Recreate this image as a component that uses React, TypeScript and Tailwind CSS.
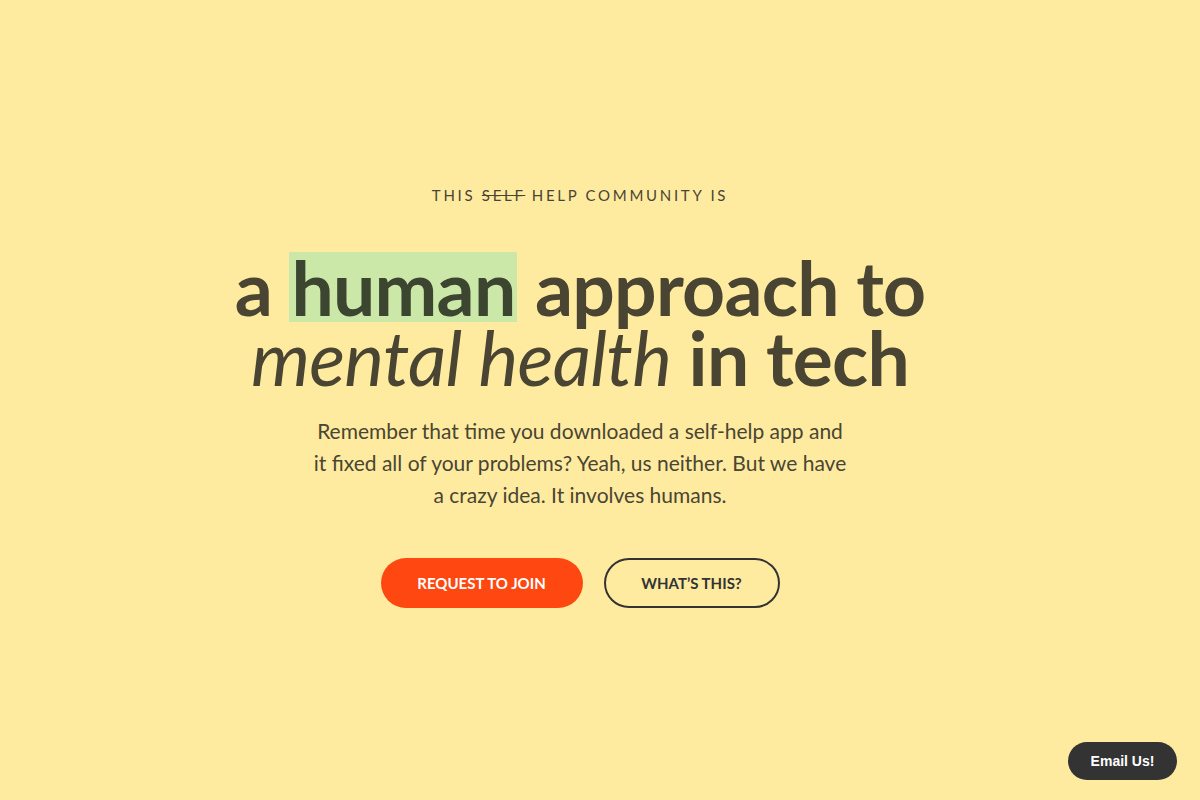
export default function App() {
    return (
        <div className="min-h-screen w-full bg-[#feeba0] relative font-['Lato','Noto_Sans',sans-serif] text-[#4a4533]">
            <div className="flex flex-col items-center pt-[185px] pr-[40px]">
                <p className="text-[15px] leading-[20px] tracking-[0.18em] uppercase text-[#4a4533]">
                    This <span className="line-through">Self</span> Help Community Is
                </p>
                <h1 className="mt-[47px] text-center text-[75px] leading-[70px] font-bold tracking-[-0.01em]">
                    a <span className="inline-block bg-[#cbe8a9] text-[#3b4530] px-[2px]">human</span> approach to
                    <br />
                    <span className="font-normal italic">mental health</span> in tech
                </h1>
                <p className="mt-[23px] w-[580px] text-center text-[21px] leading-[32px]">
                    Remember that time you downloaded a self-help app and
                    <br />
                    it fixed all of your problems? Yeah, us neither. But we have
                    <br />
                    a crazy idea. It involves humans.
                </p>
                <div className="mt-[47px] flex gap-[21px]">
                    <button className="h-[50px] w-[202px] rounded-full bg-[#ff4711] text-white text-[15px] font-bold uppercase">
                        Request to join
                    </button>
                    <button className="h-[50px] w-[176px] rounded-full border-2 border-[#333] text-[#333] text-[15px] font-bold uppercase">
                        What’s this?
                    </button>
                </div>
            </div>
            <button className="absolute right-[23px] bottom-[20px] h-[38px] w-[109px] rounded-full bg-[#333] text-white text-[14px] font-bold font-['Liberation_Sans',sans-serif]">
                Email Us!
            </button>
        </div>
    );
}
